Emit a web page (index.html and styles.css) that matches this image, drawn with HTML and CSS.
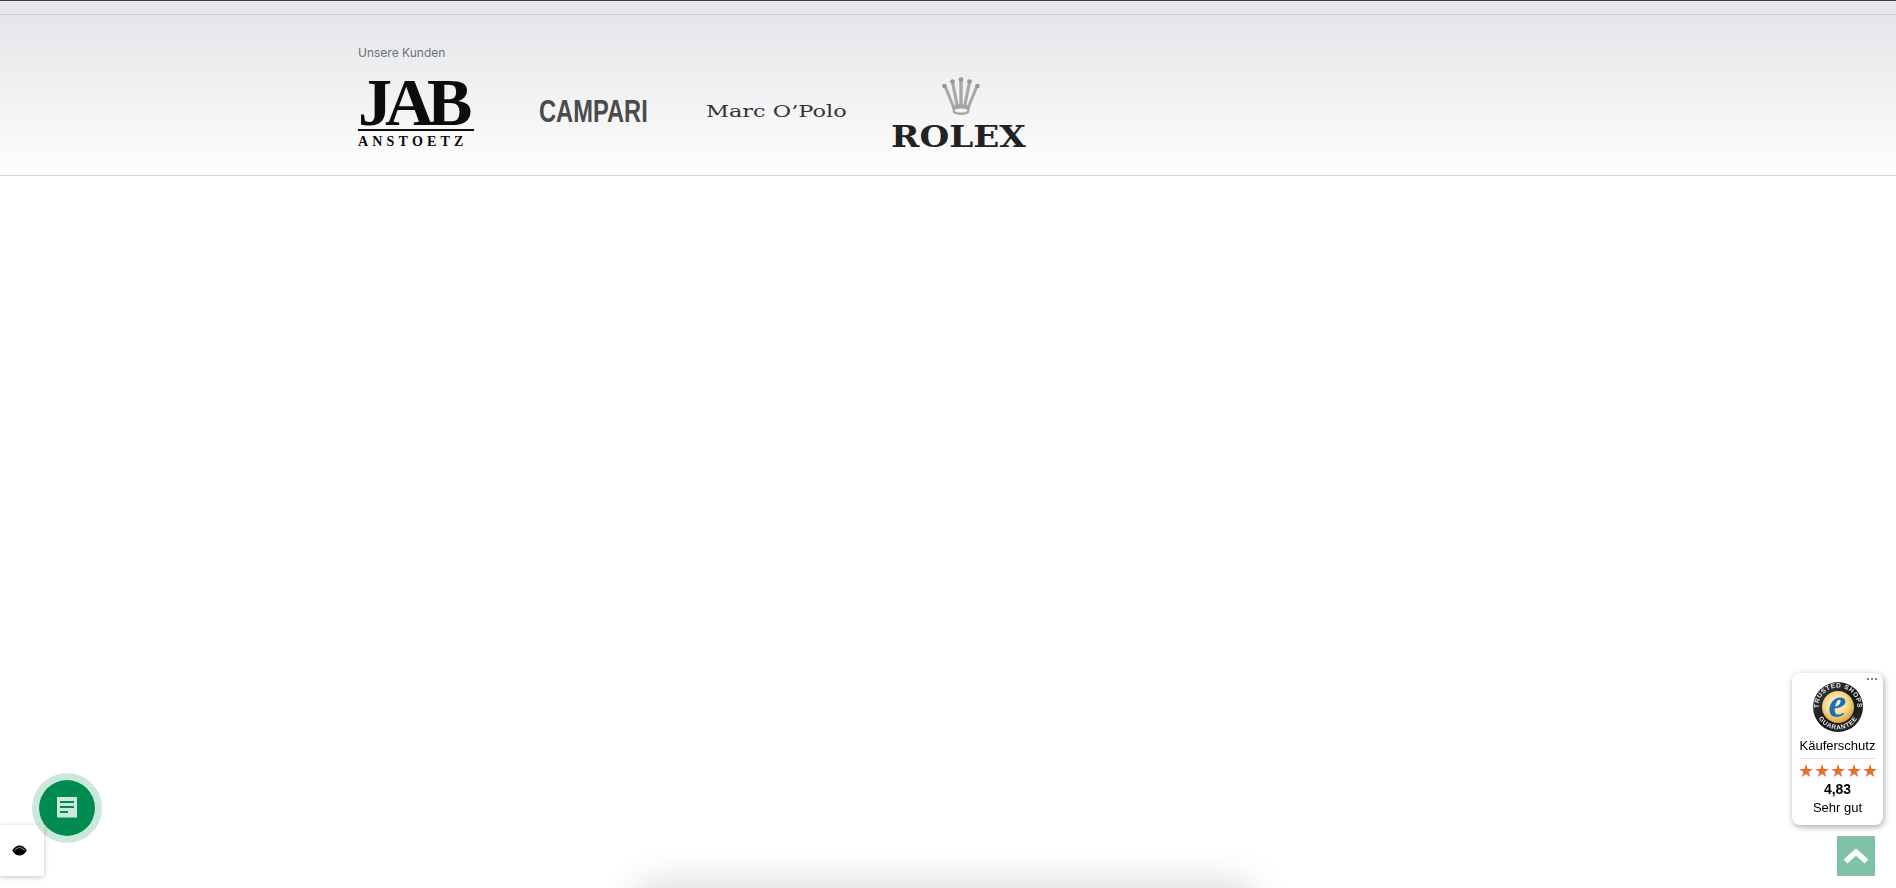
FILE: index.html
```html
<!DOCTYPE html>
<html lang="de">
  <head>
    <meta charset="UTF-8" />
    <title>Unsere Kunden</title>
    <link rel="stylesheet" href="styles.css">
  </head>
  <body>
    <section class="customers">
      <div class="customers-inner">
        <p class="customers-title">Unsere Kunden</p>
        <div class="logos">
          <div class="logo-jab">
            <div class="jab-name">JAB</div>
            <div class="jab-sub">ANSTOETZ</div>
          </div>
          <div class="logo-campari"><span>CAMPARI</span></div>
          <div class="logo-marc"><span>Marc O’Polo</span></div>
          <div class="logo-rolex">
            <svg class="crown" viewBox="0 0 38 40" width="38" height="40">
              <g fill="none" stroke="#a8a8a8" stroke-linecap="round">
                <path d="M12 31 3 9" stroke-width="3" />
                <path d="M15.500 30 10.500 5" stroke-width="3.2" />
                <path d="M19 30V3" stroke-width="3.4" />
                <path d="M22.500 30 27.500 5" stroke-width="3.2" />
                <path d="M26 31 35 9" stroke-width="3" />
              </g>
              <g fill="#969696">
                <circle cx="2.500" cy="9" r="2.300" />
                <circle cx="10.500" cy="4.500" r="2.300" />
                <circle cx="19" cy="2.500" r="2.300" />
                <circle cx="27.500" cy="4.500" r="2.300" />
                <circle cx="35.500" cy="9" r="2.300" />
              </g>
              <path d="M10 29q9 -4 18 0l-1 7q-8 4 -16 0z" fill="#a4a4a4" />
              <ellipse cx="19" cy="33.500" rx="6.500" ry="2" fill="#f4f4f5" />
            </svg>
            <div class="rolex-name">ROLEX</div>
          </div>
        </div>
      </div>
    </section>

    <div class="bottom-bar"></div>

    <button class="note-button">
      <svg viewBox="0 0 24 24" width="24" height="24">
        <path d="M2 1h20v20.500h-20z" fill="#cfeadd" />
        <path d="M5 6h14M5 11h14M5 16h8" stroke="#008c50" stroke-width="2" fill="none" />
      </svg>
    </button>

    <div class="eye-tab">
      <svg viewBox="0 0 16 12" width="15" height="11">
        <path d="M0 6C2.500 2 5 .5 8 .5S13.500 2 16 6c-2.500 4-5 5.500-8 5.500S2.500 10 0 6z" fill="#000" />
        <path d="M2.500 6C4 4 6 3 8 3s4 1 5.500 3" stroke="#fff" stroke-width=".7" fill="none" />
        <circle cx="8" cy="6" r="2.600" fill="#000" />
      </svg>
    </div>

    <aside class="ts-badge">
      <div class="ts-dots">
        <span></span><span></span><span></span>
      </div>
      <svg class="ts-seal" viewBox="0 0 50 50" width="50" height="50">
        <defs>
          <radialGradient id="gold" cx="45%" cy="40%" r="60%">
            <stop offset="0" stop-color="#fff8dc" />
            <stop offset="0.6" stop-color="#f6d98a" />
            <stop offset="1" stop-color="#d9a63c" />
          </radialGradient>
          <linearGradient id="rim" x1="0" y1="0" x2="1" y2="1">
            <stop offset="0" stop-color="#4a4a4a" />
            <stop offset="0.5" stop-color="#151515" />
            <stop offset="1" stop-color="#2c2c2c" />
          </linearGradient>
          <path id="arcTop" d="M5.500 25a19.500 19.500 0 0 1 39 0" />
          <path id="arcBottom" d="M2.500 25a22.500 22.500 0 0 0 45 0" />
        </defs>
        <circle cx="25" cy="25" r="25" fill="url(#rim)" />
        <circle cx="25" cy="25" r="16" fill="url(#gold)" />
        <text class="seal-text"><textPath href="#arcTop" startOffset="50%" text-anchor="middle">TRUSTED SHOPS</textPath></text>
        <text class="seal-text"><textPath href="#arcBottom" startOffset="50%" text-anchor="middle">GUARANTEE</textPath></text>
        <text class="seal-e" x="24.500" y="35" text-anchor="middle">e</text>
      </svg>
      <div class="ts-label">Käuferschutz</div>
      <div class="ts-rating">
        <div class="ts-stars">★★★★★</div>
        <div class="ts-score">4,83</div>
        <div class="ts-grade">Sehr gut</div>
      </div>
    </aside>

    <a class="to-top" href="#">
      <svg viewBox="0 0 28 20" width="28" height="20">
        <path d="M3.500 15.500 14 6l10.500 9.500" fill="none" stroke="#fff" stroke-width="5.500" />
      </svg>
    </a>
  </body>
</html>
```

FILE: styles.css
```css
html, body {
  height: 100%;
}
body {
  margin: 0;
  background: #fff;
  font-family: Inter, "Liberation Sans", sans-serif;
  overflow: hidden;
}

.customers {
  height: 174px;
  border-top: 1px solid #3c3d47;
  border-bottom: 1px solid #d6d5da;
  background: linear-gradient(#e6e7ea 0, #e6e7ea 20px, #fdfdfd 170px);
}
.customers::before {
  content: "";
  display: block;
  height: 1px;
  margin-top: 13px;
  background: #cfd0d4;
}
.customers-inner {
  padding-left: 358px;
}
.customers-title {
  margin: 0;
  padding-top: 30px;
  font-size: 12px;
  line-height: 16px;
  color: #6b7080;
}

.logos {
  display: flex;
  align-items: flex-start;
  margin-top: 10px;
}
.logo-jab {
  width: 116px;
  margin-right: 65px;
  color: #0c0c0c;
}
.jab-name {
  font-family: "Liberation Serif", serif;
  font-weight: bold;
  font-size: 68px;
  line-height: 50px;
  height: 52px;
  padding-top: 6px;
  letter-spacing: -7px;
  border-bottom: 2px solid #0c0c0c;
}
.jab-sub {
  margin-top: 5px;
  font-family: "Liberation Serif", serif;
  font-weight: bold;
  font-size: 14px;
  line-height: 12px;
  letter-spacing: 4.200px;
  white-space: nowrap;
}
.logo-campari {
  width: 109px;
  margin-right: 58px;
  margin-top: 24px;
  color: #4b4b4b;
  font-family: "Liberation Sans", sans-serif;
  font-weight: bold;
  font-size: 32px;
  line-height: 32px;
  white-space: nowrap;
}
.logo-campari span {
  display: inline-block;
  transform: scaleX(0.74);
  transform-origin: left center;
}
.logo-marc {
  width: 140px;
  margin-right: 45px;
  margin-top: 31px;
  font-family: "DejaVu Serif", serif;
  font-size: 16.500px;
  line-height: 20px;
  color: #333;
  white-space: nowrap;
}
.logo-marc span {
  display: inline-block;
  transform: scaleX(1.36);
  transform-origin: left center;
}
.logo-rolex {
  width: 135px;
  margin-top: 6px;
  color: #222;
}
.crown {
  display: block;
  margin-left: 51px;
}
.rolex-name {
  margin-top: 6px;
  font-family: "DejaVu Serif", serif;
  font-weight: bold;
  font-size: 30px;
  line-height: 28px;
  white-space: nowrap;
  transform: scaleX(1.14);
  transform-origin: left center;
}

/* fixed widgets over the page */
.bottom-bar {
  position: fixed;
  left: 640px;
  bottom: -40px;
  width: 610px;
  height: 40px;
  box-shadow: 0 0 40px rgba(0, 0, 0, 0.2);
}
.note-button {
  position: fixed;
  left: 32px;
  top: 773px;
  width: 70px;
  height: 70px;
  box-sizing: border-box;
  padding: 0;
  border: 7px solid rgba(0, 140, 80, 0.2);
  border-radius: 50%;
  background: #008c50;
  background-clip: padding-box;
  display: flex;
  align-items: center;
  justify-content: center;
  z-index: 2;
}
.eye-tab {
  position: fixed;
  left: 0;
  top: 825px;
  width: 44px;
  height: 51px;
  box-sizing: border-box;
  padding-left: 12px;
  background: #fff;
  border-radius: 0 0 3px 0;
  box-shadow: 0 1px 5px rgba(0, 0, 0, 0.25);
  display: flex;
  align-items: center;
}
.ts-badge {
  position: fixed;
  left: 1792px;
  top: 673px;
  width: 91px;
  height: 152px;
  box-sizing: border-box;
  padding-top: 9px;
  background: #fff;
  border-radius: 8px;
  box-shadow: 1px 2px 6px rgba(0, 0, 0, 0.35);
  font-family: "Liberation Sans", sans-serif;
  color: #000;
  text-align: center;
}
.ts-dots {
  position: absolute;
  top: 5px;
  right: 6px;
  display: flex;
  gap: 2px;
}
.ts-dots span {
  width: 2px;
  height: 2px;
  border-radius: 50%;
  background: #555;
}
.ts-seal {
  display: block;
  margin: 0 auto;
}
.seal-text {
  font-family: "Liberation Sans", sans-serif;
  font-weight: bold;
  font-size: 6.500px;
  letter-spacing: 0.6px;
  fill: #e8e8e8;
}
.seal-e {
  font-family: "Liberation Serif", serif;
  font-style: italic;
  font-weight: bold;
  font-size: 40px;
  fill: #1f6db3;
}
.ts-label {
  margin: 5px 7px 0;
  padding-bottom: 4px;
  border-bottom: 1px solid #e0e0e0;
  font-size: 13px;
  line-height: 17px;
  white-space: nowrap;
  display: flex;
  justify-content: center;
}
.ts-stars {
  margin-top: 3px;
  font-size: 17.500px;
  line-height: 18px;
  color: #e0702c;
  white-space: nowrap;
}
.ts-score {
  font-size: 14px;
  font-weight: bold;
  line-height: 18px;
}
.ts-grade {
  margin-top: 1px;
  font-size: 13px;
  line-height: 18px;
}
.to-top {
  position: fixed;
  left: 1837px;
  top: 836px;
  width: 38px;
  height: 40px;
  background: #7fc2a4;
  border-radius: 1px;
  display: flex;
  align-items: center;
  justify-content: center;
}
```
